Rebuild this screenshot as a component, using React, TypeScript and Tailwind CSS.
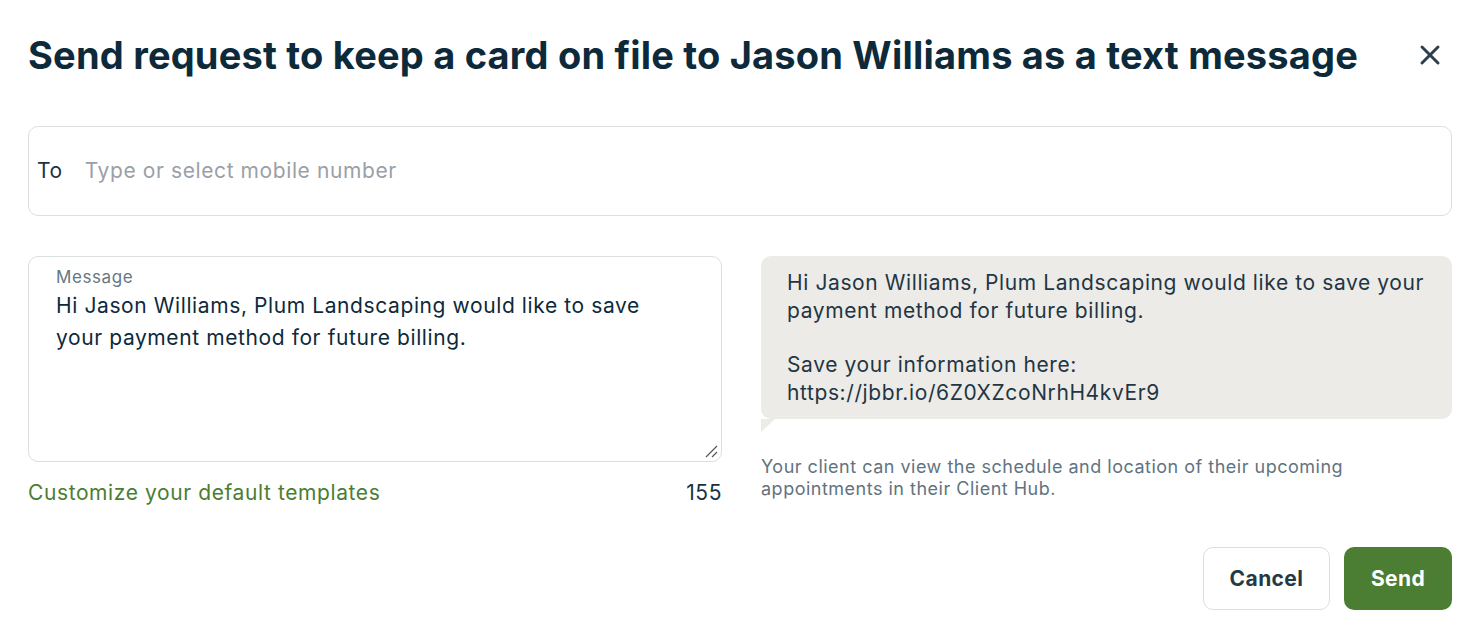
import { X } from "lucide-react";

export default function App() {
  return (
    <div className="w-[1480px] h-[644px] bg-white font-['Inter',sans-serif] text-[#032b3a] px-[28px]">
      {/* Header */}
      <div className="flex items-center justify-between pt-[28px] h-[82px]">
        <h1 className="text-[38px] font-bold tracking-[0.2px] leading-none text-[#0d2a3b]">
          Send request to keep a card on file to Jason Williams as a text message
        </h1>
        <button className="mr-[6px] text-[#2b3f4c]">
          <X size={32} strokeWidth={2.2} />
        </button>
      </div>

      {/* To field */}
      <div className="mt-[44px] h-[90px] rounded-[10px] border border-[#dcdedf] flex items-center px-[8px] gap-[22px] text-[21px] tracking-[0.6px]">
        <span className="text-[#1b3340]">To</span>
        <span className="text-[#9aa0a8]">Type or select mobile number</span>
      </div>

      <div className="mt-[40px] flex gap-[39px]">
        {/* Message */}
        <div className="w-[694px]">
          <div className="relative h-[206px] rounded-[10px] border border-[#dcdedf] pl-[27px] pr-[60px] pt-[10px]">
            <div className="text-[17px] leading-[20px] tracking-[0.6px] text-[#667784]">Message</div>
            <div className="mt-[3px] text-[21px] leading-[32px] tracking-[0.6px] text-[#0d2a3b]">
              Hi Jason Williams, Plum Landscaping would like to save your payment method for future billing.
            </div>
            <svg className="absolute right-[3px] bottom-[3px]" width="14" height="14" viewBox="0 0 14 14">
              <path d="M13 2 L2 13 M13 8 L8 13" stroke="#555" strokeWidth="1.2" />
            </svg>
          </div>
          <div className="mt-[18px] flex justify-between text-[21px] leading-[26px] tracking-[0.6px]">
            <span className="text-[#4b7d33]">Customize your default templates</span>
            <span className="text-[#1b3340]">155</span>
          </div>
        </div>

        {/* Preview */}
        <div className="flex-1">
          <div className="relative">
            <div className="rounded-[10px] bg-[#edebe7] px-[26px] pt-[13px] pb-[12px] text-[21px] leading-[28px] tracking-[0.6px] text-[#1f3644]">
              <p>Hi Jason Williams, Plum Landscaping would like to save your payment method for future billing.</p>
              <p className="mt-[26px]">Save your information here:</p>
              <p>https://jbbr.io/6Z0XZcoNrhH4kvEr9</p>
            </div>
            <svg className="block" width="14" height="13" viewBox="0 0 14 13">
              <path d="M0 0 H14 L0 13 Z" fill="#edebe7" />
            </svg>
          </div>
          <p className="mt-[24px] text-[18px] leading-[22px] tracking-[0.5px] text-[#627380] w-[620px]">
            Your client can view the schedule and location of their upcoming appointments in their Client Hub.
          </p>
        </div>
      </div>

      {/* Footer */}
      <div className="mt-[41px] flex justify-end gap-[14px]">
        <button className="h-[63px] w-[127px] rounded-[10px] border border-[#dcdedf] text-[21px] font-bold tracking-[0.4px] text-[#243a47]">
          Cancel
        </button>
        <button className="h-[63px] w-[108px] rounded-[10px] bg-[#4b7d33] text-[21px] font-bold tracking-[0.4px] text-white">
          Send
        </button>
      </div>
    </div>
  );
}
